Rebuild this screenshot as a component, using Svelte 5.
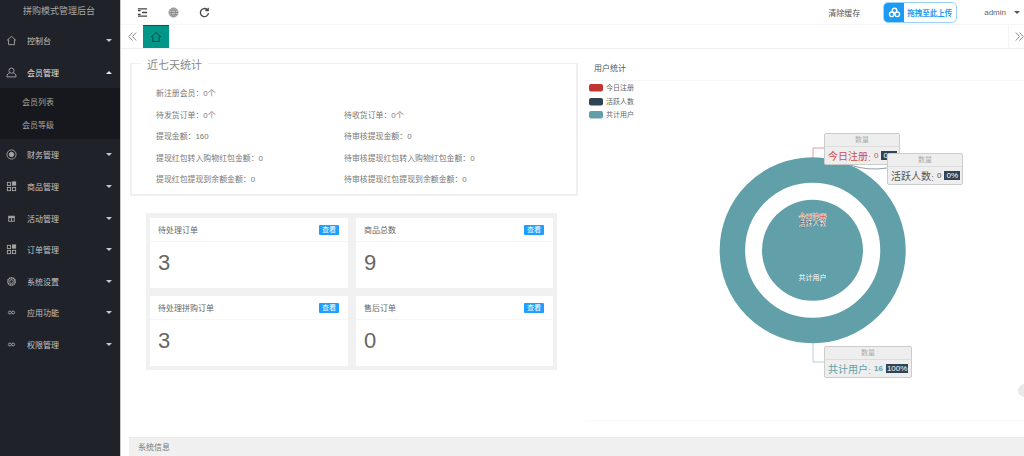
<script>
  const menu = [
    { name: '控制台', icon: 'home' },
    { name: '会员管理', icon: 'user', open: true, subs: ['会员列表', '会员等级'] },
    { name: '财务管理', icon: 'coin' },
    { name: '商品管理', icon: 'grid' },
    { name: '活动管理', icon: 'gift' },
    { name: '订单管理', icon: 'grid' },
    { name: '系统设置', icon: 'gear' },
    { name: '应用功能', icon: 'link' },
    { name: '权限管理', icon: 'link' }
  ];
  const stats = [
    ['新注册会员：0个', ''],
    ['待发货订单：0个', '待收货订单：0个'],
    ['提现金额：160', '待审核提现金额：0'],
    ['提现红包转入购物红包金额：0', '待审核提现红包转入购物红包金额：0'],
    ['提现红包提现到余额金额：0', '待审核提现红包提现到余额金额：0']
  ];
  const cards = [
    { title: '待处理订单', value: 3 },
    { title: '商品总数', value: 9 },
    { title: '待处理拼购订单', value: 3 },
    { title: '售后订单', value: 0 }
  ];
  const legend = [
    { label: '今日注册', color: '#c23531', y: 84 },
    { label: '活跃人数', color: '#2f4554', y: 98 },
    { label: '共计用户', color: '#61a0a8', y: 111 }
  ];
  const tips = [
    { cls: 'tip-a', label: '今日注册', value: 0, pct: '0%', color: '#cb4f4b' },
    { cls: 'tip-b', label: '活跃人数', value: 0, pct: '0%', color: '#555' },
    { cls: 'tip-c', label: '共计用户', value: 16, pct: '100%', color: '#61a0a8' }
  ];
</script>

{#snippet icon(name)}
  <svg class="mi" viewBox="0 0 12 12" aria-hidden="true">
    {#if name === 'home'}
      <path d="M1 6 6 1.500 11 6M2.800 4.800v5.700h6.400V4.800" />
    {:else if name === 'user'}
      <circle cx="6" cy="4" r="2.800" /><path d="M1 10.800c0-3.200 1.800-4.100 3-4.300M11 10.800c0-3.200-1.800-4.100-3-4.300M1 10.800h10" />
    {:else if name === 'coin'}
      <circle cx="6" cy="6" r="5" /><circle class="fill" cx="6" cy="6" r="2.400" />
    {:else if name === 'grid'}
      <rect x="1.500" y="1.500" width="3.500" height="3.500" /><rect class="fill" x="7" y="1" width="3.500" height="3.500" /><rect x="1.500" y="7" width="3.500" height="3.500" /><rect x="7" y="7" width="3.500" height="3.500" />
    {:else if name === 'gift'}
      <rect class="fill" x="3" y="3.500" width="6" height="1.500" /><rect x="3" y="5" width="6" height="4" /><path d="M6 3.500V9" />
    {:else if name === 'gear'}
      <circle cx="6" cy="6" r="2" /><circle class="thick" cx="6" cy="6" r="4" />
    {:else}
      <circle cx="4.200" cy="6" r="1.600" /><circle cx="7.800" cy="6" r="1.600" />
    {/if}
  </svg>
{/snippet}

<div class="app">
  <aside class="side">
    <div class="brand">拼购模式管理后台</div>
    <nav>
      {#each menu as m}
        <div class="item" class:on={m.open}>
          {@render icon(m.icon)}
          <span class="name">{m.name}</span>
          <i class="caret" class:up={m.open}></i>
        </div>
        {#if m.subs}
          <div class="subs">
            {#each m.subs as s}<div class="sub">{s}</div>{/each}
          </div>
        {/if}
      {/each}
    </nav>
  </aside>

  <main class="main">
    <header class="top">
      <svg class="ti" viewBox="0 0 12 12"><path d="M1 2h10M1 10h10M5.500 6H11M1 4h3M1 8h3" stroke-width="1.500" /></svg>
      <svg class="ti globe" viewBox="0 0 12 12"><circle cx="6" cy="6" r="5" /><path d="M1 6h10M2 3.500h8M2 8.500h8M6 1c-3 3-3 7 0 10M6 1c3 3 3 7 0 10" /></svg>
      <svg class="ti" viewBox="0 0 12 12"><path d="M10.300 6.500a4.400 4.400 0 1 1-1.300-3.600M10 .8v3H7" stroke-width="1.400" /></svg>
      <span class="clear">清除缓存</span>
      <div class="upload">
        <span class="cloud">
          <svg viewBox="0 0 14 12"><circle cx="7" cy="3.900" r="2.500" /><circle cx="4" cy="8" r="2.500" /><circle cx="10" cy="8" r="2.500" /></svg>
        </span>
        <span class="up-text">拖拽至此上传</span>
      </div>
      <span class="admin">admin</span>
      <i class="caret dark"></i>
    </header>

    <div class="tabs">
      <span class="chev">
        <svg viewBox="0 0 9 9"><path d="M4.500 .5.800 4.500l3.700 4M8.200 .5 4.500 4.500l3.700 4" /></svg>
      </span>
      <span class="tab">
        <svg viewBox="0 0 12 12"><path d="M1 6 6 1.500 11 6M2.800 4.800v5.700h6.400V4.800" /></svg>
      </span>
      <span class="chev end">
        <svg viewBox="0 0 9 9"><path d="M.8 .5 4.500 4.500.8 8.500M4.500 .5 8.200 4.500l-3.700 4" /></svg>
      </span>
    </div>

    <div class="body">
      <section class="left">
        <fieldset class="week">
          <legend>近七天统计</legend>
          <div class="rows">
            {#each stats as row}
              <span>{row[0]}</span><span>{row[1]}</span>
            {/each}
          </div>
        </fieldset>

        <div class="cards">
          {#each cards as c}
            <article class="card">
              <div class="card-head">
                <span>{c.title}</span>
                <b class="view">查看</b>
              </div>
              <div class="num">{c.value}</div>
            </article>
          {/each}
        </div>
      </section>

      <section class="right">
        <div class="r-title">用户统计</div>
        <div class="chart">
          <svg class="plot" viewBox="585 81 439 339" preserveAspectRatio="xMinYMin meet">
            {#each legend as l}
              <rect x="589" y={l.y} width="14" height="7.500" rx="2" fill={l.color} />
              <text class="lg" x="606" y={l.y + 6}>{l.label}</text>
            {/each}
            <circle cx="812.700" cy="250.300" r="80.300" class="ring" />
            <circle cx="812.500" cy="250.300" r="50.500" fill="#61a0a8" />
            <path d="M813 157V148H824" class="ln" stroke="#e39c99" />
            <path d="M850 165Q868 171 887 168" class="ln" stroke="#8fa0ab" />
            <path d="M813 343V362H824" class="ln" stroke="#b4d4d8" />
            <text class="in red" x="812.500" y="219">今日注册</text>
            <text class="in navy" x="812.500" y="225.500">活跃人数</text>
            <text class="in plain" x="812.500" y="279.500">共计用户</text>
          </svg>
          {#each tips as t}
            <div class="tip {t.cls}">
              <div class="tip-h">数量</div>
              <div class="tip-b-row" style="color:{t.color}">
                <span class="tl">{t.label}<span class="colon">：</span></span><span class="tv">{t.value}</span><span class="pct">{t.pct}</span>
              </div>
            </div>
          {/each}
          <span class="edge"></span>
        </div>
      </section>
    </div>

    <footer class="sys">系统信息</footer>
  </main>
</div>

<style>
  :global(body) { margin: 0; background: #fff; overflow: hidden; }
  .app {
    display: flex; width: 1024px; height: 456px; overflow: hidden;
    font-family: "Liberation Sans", "Noto Sans CJK SC", sans-serif;
    font-size: 8px; color: #666;
  }
  .side { width: 121px; flex: none; box-sizing: border-box; background: #1f2229; border-right: 1px solid #c9c9c9; color: #c2c2c2; }
  .brand { height: 25px; line-height: 22px; font-size: 9px; text-align: center; padding-right: 2px; color: #a8a8a8; }
  .item { height: 31.600px; display: flex; align-items: center; padding: 0 8px 0 6px; box-sizing: border-box; }
  .item.on { color: #e4e4e4; }
  .mi { width: 11px; height: 11px; fill: none; stroke: #a5a5a5; stroke-width: 1; flex: none; }
  .mi .fill { fill: #a5a5a5; }
  .mi .thick { stroke-width: 1.800; stroke-dasharray: 1.600 .6; }
  .name { margin-left: 10px; flex: 1; }
  .caret { width: 0; height: 0; border: 3.500px solid transparent; border-top: 3px solid #c8c8c8; border-bottom: 0; }
  .caret.up { border-top: 0; border-bottom: 3px solid #e8e8e8; }
  .caret.dark { border-top-color: #555; margin-left: 8px; margin-right: 4px; }
  .subs { background: #16181d; height: 51px; padding-top: 3px; box-sizing: border-box; }
  .sub { height: 23px; line-height: 23px; padding-left: 22px; color: #a3a3a3; }

  .main { flex: 1; min-width: 0; display: flex; flex-direction: column; }
  .top { height: 25px; flex: none; display: flex; align-items: center; box-sizing: border-box; border-bottom: 1px solid #f6f6f6; padding-left: 16px; }
  .ti { width: 11px; height: 11px; fill: none; stroke: #444; stroke-width: 1.200; margin-right: 20px; }
  .ti.globe { stroke: #777; fill: #c4c4c4; stroke-width: .7; }
  .clear { margin-left: auto; color: #555; }
  .upload { margin-left: 23px; width: 74px; height: 21px; box-sizing: border-box; display: flex; align-items: center; border: 1px solid #9ad4fb; border-radius: 5px; overflow: hidden; }
  .cloud { width: 20px; height: 100%; background: #1a9bf5; display: flex; align-items: center; justify-content: center; flex: none; }
  .cloud svg { width: 13px; height: 11px; fill: none; stroke: #fff; stroke-width: 1.500; }
  .up-text { color: #1a9bf5; margin-left: 3px; font-size: 7.500px; font-weight: 700; white-space: nowrap; }
  .admin { margin-left: 27px; color: #666; font-size: 8px; }

  .tabs { height: 24px; flex: none; display: flex; align-items: stretch; box-sizing: border-box; border-bottom: 1px solid #efefef; }
  .chev { width: 22px; display: flex; align-items: center; justify-content: center; }
  .chev svg { width: 9px; height: 9px; fill: none; stroke: #888; stroke-width: 1; }
  .chev.end { margin-left: auto; width: 16px; padding-left: 6px; border-left: 1px solid #f4f4f4; box-sizing: border-box; }
  .tab { width: 26px; background: #009688; border-top: 1px solid #2a4a48; display: flex; align-items: center; justify-content: center; box-sizing: border-box; }
  .tab svg { width: 12px; height: 12px; fill: none; stroke: #0c4f48; stroke-width: 1; }

  .body { flex: 1; min-height: 0; display: flex; }
  .left { width: 464px; flex: none; padding: 6px 0 0 9px; box-sizing: border-box; }
  .week { margin: 0; width: 448px; height: 141px; box-sizing: border-box; border: 1px solid #f0f0f0; border-width: 1px 2px 2px 2px; padding: 0 0 0 24px; }
  legend { font-size: 11px; margin-left: -15px; padding: 0 6px; color: #888; line-height: 16px; position: relative; top: 2px; }
  .rows { display: grid; grid-template-columns: 188px 1fr; grid-auto-rows: 21.500px; align-items: center; padding-top: 11px; color: #777; font-size: 7.900px; }

  .cards {
    margin: 17px 0 0 16px; width: 411px; height: 157px; box-sizing: border-box; background: #f1f1f1;
    padding: 5px 4px 4px; display: grid; grid-template-columns: 198px 197px; grid-template-rows: 70px 70px; gap: 8px;
  }
  .card { background: #fff; border-radius: 1px; }
  .card-head { height: 24px; box-sizing: border-box; border-bottom: 1px solid #f6f6f6; display: flex; align-items: center; justify-content: space-between; padding: 0 9px 0 8px; color: #666; }
  .view { background: #1e9fff; color: #fff; font-size: 7px; font-weight: 400; width: 20px; height: 10px; line-height: 10px; text-align: center; border-radius: 1px; }
  .num { padding: 8px 0 0 8px; font-size: 22px; line-height: 26px; color: #666; }

  .right { flex: 1; min-width: 0; display: flex; flex-direction: column; padding-top: 8px; }
  .r-title { height: 24px; line-height: 24px; box-sizing: border-box; padding-left: 9px; border-bottom: 1px solid #f6f6f6; color: #555; }
  .chart { flex: 1; position: relative; border-bottom: 1px solid #f7f7f7; margin-bottom: 16px; overflow: hidden; }
  .plot { display: block; width: 439px; height: 339px; }
  .lg { font-size: 7px; fill: #666; }
  .ring { fill: none; stroke: #61a0a8; stroke-width: 25.500; }
  .ln { fill: none; stroke-width: 1; }
  .in { font-size: 7px; text-anchor: middle; }
  .red { fill: #d0403c; stroke: #fff; stroke-width: .7; paint-order: stroke; }
  .navy { fill: #fff; stroke: #2f4554; stroke-width: .4; paint-order: stroke; }
  .plain { fill: #fff; }

  .tip { position: absolute; box-sizing: border-box; background: #eee; border: 1px solid #ccc; border-radius: 2px; }
  .tip-a { left: 239px; top: 52px; width: 76px; height: 32px; }
  .tip-b { left: 302px; top: 72px; width: 76px; height: 32px; }
  .tip-c { left: 239px; top: 265px; width: 88px; height: 32px; }
  .tip-h { height: 13px; line-height: 12px; text-align: center; color: #aaa; font-size: 7px; border-bottom: 1px solid #ddd; box-sizing: border-box; }
  .tip-b-row { display: flex; align-items: center; height: 17px; padding-left: 3px; white-space: nowrap; }
  .tl { font-size: 10px; }
  .colon { font-size: 6px; }
  .tv { font-size: 8px; }
  .pct { background: #2f4554; color: #fff; font-size: 8px; line-height: 9px; padding: 0 2px; margin-left: 3px; }
  .tip-c .tv { font-weight: 700; }
  .tip-c .pct { padding: 0 1px; }
  .edge { position: absolute; right: -7px; top: 303px; width: 13px; height: 13px; border-radius: 50%; background: #e9e9e9; }

  .sys { height: 19px; flex: none; margin-left: 8px; background: #f0f0f0; border-top: 1px solid #e9e9e9; box-sizing: border-box; line-height: 19px; padding-left: 9px; color: #777; }
</style>
